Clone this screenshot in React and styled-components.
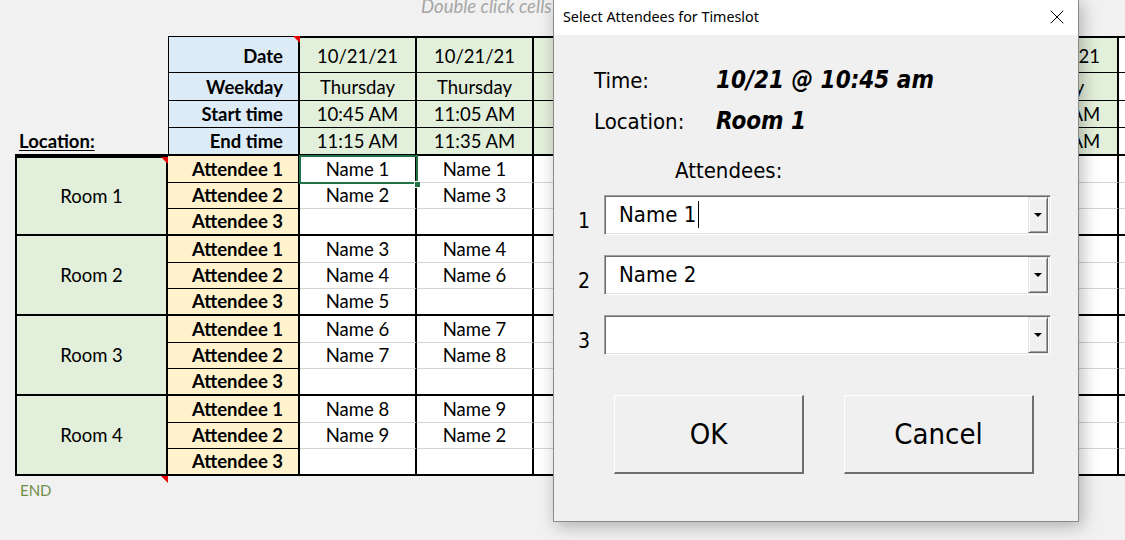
import styled, { createGlobalStyle, css } from "styled-components";
import { X } from "lucide-react";

const GlobalStyle = createGlobalStyle`
  html, body {
    margin: 0;
    padding: 0;
    overflow: hidden;
    background: #f1f1f1;
  }
`;

// columns 3-6 sit behind the dialog, so they carry no text here
const columns = [
  { date: "10/21/21", day: "Thursday", start: "10:45 AM", end: "11:15 AM" },
  { date: "10/21/21", day: "Thursday", start: "11:05 AM", end: "11:35 AM" },
  { date: "", day: "", start: "", end: "" },
  { date: "", day: "", start: "", end: "" },
  { date: "", day: "", start: "", end: "" },
  { date: "", day: "", start: "", end: "" },
  { date: "10/22/21", day: "Friday", start: "10:45 AM", end: "11:15 AM" },
];

const headerRows = [
  { key: "date", label: "Date", pad: 5 },
  { key: "day", label: "Weekday", pad: 2 },
  { key: "start", label: "Start time", pad: 2 },
  { key: "end", label: "End time", pad: 2 },
];

const rooms = [
  { name: "Room 1", slots: [["Name 1", "Name 1"], ["Name 2", "Name 3"], ["", ""]] },
  { name: "Room 2", slots: [["Name 3", "Name 4"], ["Name 4", "Name 6"], ["Name 5", ""]] },
  { name: "Room 3", slots: [["Name 6", "Name 7"], ["Name 7", "Name 8"], ["", ""]] },
  { name: "Room 4", slots: [["Name 8", "Name 9"], ["Name 9", "Name 2"], ["", ""]] },
];

const flag = css`
  ${(p) =>
    p.$flag &&
    css`
      &::after {
        content: "";
        position: absolute;
        top: ${p.$flagTop ?? -1}px;
        right: ${p.$flagRight ?? -2}px;
        border-top: 7px solid #e60000;
        border-left: 7px solid transparent;
      }
    `}
`;

const Page = styled.div`
  position: relative;
  width: 1125px;
  height: 540px;
  overflow: hidden;
  background: #f1f1f1;
  font-family: Lato, "Liberation Sans", sans-serif;
  font-size: 18.5px;
  color: #000;
`;

const Sheet = styled.div`
  padding-left: 15px;
`;

const Note = styled.div`
  height: 36px;
  padding-left: 406px;
  line-height: 12px;
  font-style: italic;
  color: #a6a6a6;
  white-space: nowrap;
`;

const Grid = styled.div`
  display: grid;
  grid-template-columns: 153px 132px repeat(7, 117px) 40px;
  grid-template-rows: 37px 28px 27px 28px repeat(4, 27px 26px 27px);
`;

const Cell = styled.div`
  box-sizing: border-box;
  display: flex;
  align-items: flex-end;
  white-space: nowrap;
  line-height: 21px;
  position: relative;
`;

const Blank = styled.div``;

const LocationCell = styled(Cell)`
  padding: 0 0 2px 4px;
  font-weight: 700;
  text-decoration: underline;
  text-underline-offset: 2px;
  border-bottom: 2px solid #000;
`;

const HeadLabel = styled(Cell)`
  justify-content: flex-end;
  padding: 0 15px ${(p) => p.$pad}px 0;
  background: #ddebf7;
  font-weight: 700;
  border-left: 1px solid #000;
  border-right: 2px solid #000;
  border-top: ${(p) => (p.$first ? "1px solid #000" : "0")};
  border-bottom: ${(p) => (p.$last ? "2px" : "1px")} solid #000;
  ${flag}
`;

const HeadValue = styled(Cell)`
  justify-content: center;
  padding-bottom: ${(p) => p.$pad}px;
  background: ${(p) => (p.$blank ? "#ffffff" : "#e2efda")};
  border-right: 2px solid #000;
  border-top: ${(p) => (p.$first ? "2px solid #000" : "0")};
  border-bottom: ${(p) => (p.$last ? "2px" : "1px")} solid #000;
`;

const RoomCell = styled(Cell)`
  grid-row: span 3;
  align-items: center;
  justify-content: center;
  background: #e2efda;
  border: 2px solid #000;
  border-top: ${(p) => (p.$first ? "2px solid #000" : "0")};
  ${flag}
`;

const AttLabel = styled(Cell)`
  justify-content: flex-end;
  padding: 0 15px 2px 0;
  background: #fff2cc;
  font-weight: 700;
  border-right: 2px solid #000;
  border-bottom: ${(p) => (p.$last ? "2px solid #000" : "1px solid #000")};
`;

const DataCell = styled(Cell)`
  justify-content: center;
  padding-bottom: 2px;
  background: #fff;
  border-right: 2px solid #000;
  border-bottom: ${(p) => (p.$last ? "2px solid #000" : "1px solid #d4d4d4")};
  ${(p) =>
    p.$selected &&
    css`
      z-index: 1;
      &::before {
        content: "";
        position: absolute;
        box-sizing: border-box;
        top: -1px;
        left: -1px;
        right: -3px;
        bottom: -2px;
        border: 2px solid #217346;
      }
      &::after {
        content: "";
        position: absolute;
        right: -6px;
        bottom: -6px;
        width: 5px;
        height: 5px;
        background: #217346;
        border: 1px solid #fff;
      }
    `}
`;

const Footer = styled.div`
  display: flex;
`;

const EndCell = styled.div`
  position: relative;
  box-sizing: border-box;
  width: 153px;
  height: 40px;
  padding: 5px 0 0 5px;
  font-size: 15px;
  line-height: 18px;
  color: #6f8f4a;
  ${flag}
`;

/* dialog */

const Dialog = styled.div`
  position: absolute;
  left: 553px;
  top: -1px;
  width: 526px;
  height: 523px;
  box-sizing: border-box;
  border: 1px solid #8a8a8a;
  background: #f0f0f0;
  box-shadow: 3px 4px 16px rgba(0, 0, 0, 0.28);
  font-family: "DejaVu Sans Condensed", "DejaVu Sans", sans-serif;
  color: #000;
`;

const TitleBar = styled.div`
  height: 35px;
  background: #fff;
  display: flex;
  align-items: center;
  justify-content: space-between;
  padding: 0 9px 0 9px;
`;

const Title = styled.div`
  font-family: "Noto Sans", "Open Sans", sans-serif;
  font-size: 14.3px;
  color: #000;
  margin-top: -2px;
`;

const Close = styled.div`
  display: flex;
  margin-top: -2px;
`;

const Info = styled.div`
  display: grid;
  grid-template-columns: 122px auto;
  align-items: baseline;
  padding: 25px 0 0 40px;
`;

const InfoLabel = styled.div`
  font-size: 22px;
  line-height: 40px;
`;

const InfoValue = styled.div`
  font-size: 24px;
  line-height: 40px;
  font-weight: 700;
  font-style: italic;
`;

const Heading = styled.div`
  margin-top: 9px;
  padding-left: 121px;
  font-size: 22px;
  line-height: 40px;
`;

const ComboList = styled.div`
  margin-top: 4px;
  padding-left: 19px;
  display: flex;
  flex-direction: column;
  gap: 20px;
`;

const ComboRow = styled.div`
  display: flex;
  height: 40px;
`;

const Num = styled.div`
  width: 22px;
  margin-right: 9px;
  align-self: flex-end;
  padding-bottom: 2px;
  font-size: 21px;
  line-height: 24px;
  text-align: center;
`;

const Combo = styled.div`
  box-sizing: border-box;
  width: 447px;
  height: 40px;
  display: flex;
  align-items: center;
  background: #fff;
  border-top: 1px solid #a0a0a0;
  border-left: 1px solid #a0a0a0;
  border-right: 1px solid #fff;
  border-bottom: 1px solid #fff;
  box-shadow: inset 1px 1px 0 #6d6d6d, inset -1px -1px 0 #e3e3e3;
  padding: 1px 2px 1px 14px;
`;

const ComboText = styled.div`
  flex: 1;
  display: flex;
  align-items: center;
  font-size: 22px;
  margin-top: -2px;
`;

const Caret = styled.span`
  display: inline-block;
  width: 1px;
  height: 27px;
  margin-left: 2px;
  background: #000;
`;

const DropButton = styled.div`
  box-sizing: border-box;
  width: 20px;
  height: 36px;
  display: flex;
  align-items: center;
  justify-content: center;
  background: #f0f0f0;
  border-top: 1px solid #e3e3e3;
  border-left: 1px solid #e3e3e3;
  border-right: 1px solid #696969;
  border-bottom: 1px solid #696969;
  box-shadow: inset 1px 1px 0 #fff, inset -1px -1px 0 #a0a0a0;

  &::before {
    content: "";
    border-left: 4px solid transparent;
    border-right: 4px solid transparent;
    border-top: 4px solid #000;
  }
`;

const Buttons = styled.div`
  margin-top: 40px;
  padding-left: 60px;
  display: flex;
  gap: 40px;
`;

const Button = styled.div`
  box-sizing: border-box;
  width: 190px;
  height: 79px;
  display: flex;
  align-items: center;
  justify-content: center;
  background: #f0f0f0;
  border-top: 1px solid #fff;
  border-left: 1px solid #fff;
  border-right: 2px solid #6e6e6e;
  border-bottom: 2px solid #6e6e6e;
  font-size: 29px;
`;

const attendees = ["Name 1", "Name 2", ""];

export default function App() {
  return (
    <Page>
      <GlobalStyle />
      <Sheet>
        <Note>Double click cells to choose attendees</Note>
        <Grid>
          {headerRows.map((row, r) => {
            const first = r === 0;
            const last = r === headerRows.length - 1;
            return [
              last ? (
                <LocationCell key={`loc-${r}`}>Location:</LocationCell>
              ) : (
                <Blank key={`b-${r}`} />
              ),
              <HeadLabel key={`hl-${r}`} $first={first} $last={last} $pad={row.pad} $flag={first}>
                {row.label}
              </HeadLabel>,
              ...columns.map((c, i) => (
                <HeadValue key={`hv-${r}-${i}`} $first={first} $last={last} $pad={row.pad}>
                  {c[row.key]}
                </HeadValue>
              )),
              <HeadValue key={`hx-${r}`} $first={first} $last={last} $pad={row.pad} $blank />,
            ];
          })}
          {rooms.map((room, ri) =>
            room.slots.map((slot, si) => {
              const last = si === 2;
              return [
                si === 0 && (
                  <RoomCell key={`room-${ri}`} $first={ri === 0} $flag={ri === 0}>
                    {room.name}
                  </RoomCell>
                ),
                <AttLabel key={`al-${ri}-${si}`} $last={last}>
                  Attendee {si + 1}
                </AttLabel>,
                ...columns.map((_, ci) => (
                  <DataCell
                    key={`d-${ri}-${si}-${ci}`}
                    $last={last}
                    $selected={ri === 0 && si === 0 && ci === 0}
                  >
                    {slot[ci] || ""}
                  </DataCell>
                )),
                <DataCell key={`dx-${ri}-${si}`} $last={last} />,
              ];
            })
          )}
        </Grid>
        <Footer>
          <EndCell $flag $flagTop={0} $flagRight={0}>
            END
          </EndCell>
        </Footer>
      </Sheet>

      <Dialog>
        <TitleBar>
          <Title>Select Attendees for Timeslot</Title>
          <Close>
            <X size={24} strokeWidth={1} color="#000" />
          </Close>
        </TitleBar>
        <Info>
          <InfoLabel>Time:</InfoLabel>
          <InfoValue>10/21 @ 10:45 am</InfoValue>
          <InfoLabel>Location:</InfoLabel>
          <InfoValue>Room 1</InfoValue>
        </Info>
        <Heading>Attendees:</Heading>
        <ComboList>
          {attendees.map((name, i) => (
            <ComboRow key={i}>
              <Num>{i + 1}</Num>
              <Combo>
                <ComboText>
                  {name}
                  {i === 0 && <Caret />}
                </ComboText>
                <DropButton />
              </Combo>
            </ComboRow>
          ))}
        </ComboList>
        <Buttons>
          <Button>OK</Button>
          <Button>Cancel</Button>
        </Buttons>
      </Dialog>
    </Page>
  );
}
